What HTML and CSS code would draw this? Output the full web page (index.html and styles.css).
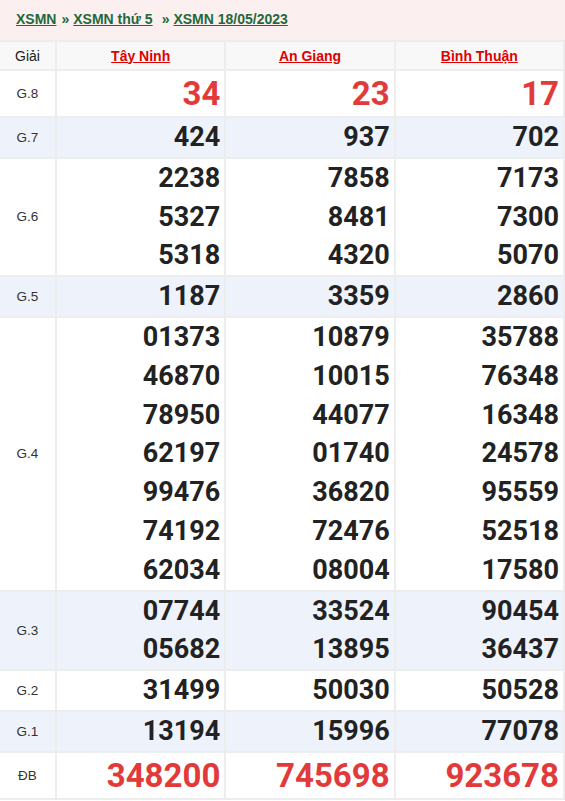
FILE: index.html
```html
<!DOCTYPE html>
<html lang="vi">
<head>
<meta charset="utf-8">
<link rel="stylesheet" href="styles.css">
</head>
<body>
<div class="crumb">
  <a href="#">XSMN</a><span class="sep">»</span><a href="#">XSMN thứ 5</a><span class="sep wide">»</span><a href="#">XSMN 18/05/2023</a>
</div>
<table class="kq">
  <colgroup><col class="c-lbl"><col class="c-num"><col class="c-num"><col class="c-num"></colgroup>
  <thead>
    <tr><th class="lbl">Giải</th><th><a href="#">Tây Ninh</a></th><th><a href="#">An Giang</a></th><th><a href="#">Bình Thuận</a></th></tr>
  </thead>
  <tbody>
    <tr class="big"><td class="lbl">G.8</td><td><div class="red">34</div></td><td><div class="red">23</div></td><td><div class="red">17</div></td></tr>
    <tr class="alt"><td class="lbl">G.7</td><td><div>424</div></td><td><div>937</div></td><td><div>702</div></td></tr>
    <tr><td class="lbl">G.6</td><td><div>2238</div><div>5327</div><div>5318</div></td><td><div>7858</div><div>8481</div><div>4320</div></td><td><div>7173</div><div>7300</div><div>5070</div></td></tr>
    <tr class="alt"><td class="lbl">G.5</td><td><div>1187</div></td><td><div>3359</div></td><td><div>2860</div></td></tr>
    <tr><td class="lbl">G.4</td>
      <td><div>01373</div><div>46870</div><div>78950</div><div>62197</div><div>99476</div><div>74192</div><div>62034</div></td>
      <td><div>10879</div><div>10015</div><div>44077</div><div>01740</div><div>36820</div><div>72476</div><div>08004</div></td>
      <td><div>35788</div><div>76348</div><div>16348</div><div>24578</div><div>95559</div><div>52518</div><div>17580</div></td></tr>
    <tr class="alt"><td class="lbl">G.3</td><td><div>07744</div><div>05682</div></td><td><div>33524</div><div>13895</div></td><td><div>90454</div><div>36437</div></td></tr>
    <tr><td class="lbl">G.2</td><td><div>31499</div></td><td><div>50030</div></td><td><div>50528</div></td></tr>
    <tr class="alt"><td class="lbl">G.1</td><td><div>13194</div></td><td><div>15996</div></td><td><div>77078</div></td></tr>
    <tr class="big"><td class="lbl">ĐB</td><td><div class="red">348200</div></td><td><div class="red">745698</div></td><td><div class="red">923678</div></td></tr>
  </tbody>
</table>
</body>
</html>
```
FILE: styles.css
```css
html, body {
  margin: 0;
  padding: 0;
  background: #fff;
  font-family: "Liberation Sans", Arial, sans-serif;
}
.crumb {
  background: #fcefef;
  height: 40px;
  line-height: 38px;
  padding-left: 16px;
  font-size: 14px;
  font-weight: bold;
  box-sizing: border-box;
}
.crumb a {
  color: #1f6a3b;
  text-decoration: underline;
}
.crumb .sep {
  color: #1f6a3b;
  margin: 0 4px 0 5px;
}
.crumb .sep.wide {
  margin: 0 4px 0 9px;
}
.kq {
  width: 565px;
  border-collapse: collapse;
  table-layout: fixed;
}
.c-lbl { width: 56px; }
.kq th, .kq td {
  border: 2px solid #ededed;
  padding: 0;
}
.kq tr > :first-child { border-left: none; }
.kq th {
  background: #f8f8f8;
  height: 27px;
  font-size: 14px;
  font-weight: bold;
  text-align: center;
}
.kq th a {
  color: #e00000;
  text-decoration: underline;
}
.kq th.lbl { color: #222; font-weight: normal; }
.kq td {
  text-align: right;
  vertical-align: middle;
}
.kq td.lbl {
  text-align: center;
  font-size: 13.5px;
  color: #333;
}
.kq td div {
  font-family: Roboto, "Liberation Sans", sans-serif;
  font-weight: bold;
  font-size: 27px;
  line-height: 38.8px;
  color: #222;
  padding-right: 4px;
}
.kq tr.alt td { background: #eef2fa; }
.kq tr.big td div {
  line-height: 45px;
}
.kq td div.red {
  color: #e23a3a;
  font-size: 33px;
}
```
